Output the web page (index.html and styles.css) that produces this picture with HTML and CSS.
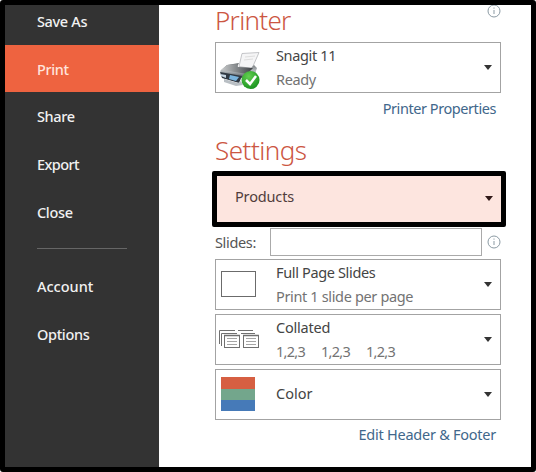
FILE: index.html
```html
<!DOCTYPE html>
<html lang="en">
<head>
<meta charset="utf-8">
<title>Print</title>
<link rel="stylesheet" href="styles.css">
</head>
<body>
<div class="window">
  <nav class="sidebar">
    <a class="item">Save As</a>
    <a class="item active">Print</a>
    <a class="item">Share</a>
    <a class="item export">Export</a>
    <a class="item">Close</a>
    <div class="divider"></div>
    <a class="item account">Account</a>
    <a class="item">Options</a>
  </nav>
  <main class="content">
    <header class="heading-row">
      <h1 class="heading printer">Printer</h1>
      <svg class="info" viewBox="0 0 14 14"><circle cx="7" cy="7" r="6"/><path d="M7 6v4M7 3.5v1.2"/></svg>
    </header>
    <section class="box printer-box">
      <svg class="icon" viewBox="0 0 48 48">
        <defs>
          <linearGradient id="body" x1="0" y1="0" x2="0" y2="1"><stop offset="0" stop-color="#65696c"/><stop offset=".5" stop-color="#b9bec1"/><stop offset="1" stop-color="#343b43"/></linearGradient>
          <linearGradient id="lid" x1="0" y1="0" x2="1" y2="0"><stop offset="0" stop-color="#c9cbcc"/><stop offset=".55" stop-color="#7c8083"/><stop offset="1" stop-color="#3c4043"/></linearGradient>
          <radialGradient id="ok" cx=".4" cy=".3" r=".7"><stop offset="0" stop-color="#63cf50"/><stop offset="1" stop-color="#1b9420"/></radialGradient>
        </defs>
        <path d="M26 9.5l17-1-7 16-13-2z" fill="#f5f5f6" stroke="#b6b8bb" stroke-width=".8"/>
        <path d="M29 13l10-1M28 16l9-1" stroke="#ddd"/>
        <path d="M11 21l12-2-2 4 14 1 3-3 3 3-3 9-29 2-5-8z" fill="url(#body)"/>
        <path d="M11 21l10-1 1 3 15 1-6 6-26-4z" fill="url(#lid)"/>
        <path d="M4 28l22 4-3 7-17-5z" fill="#303943"/>
        <path d="M4 30l6 1v3l-5-2z" fill="#c5d5e2"/>
        <path d="M14 31l9 2-3 4-7-2z" fill="#79b3dd"/>
        <path d="M8 35l14 4 3-2 2 4-7 1-12-4z" fill="#b9bfc4"/>
        <circle cx="34.500" cy="36" r="9" fill="url(#ok)"/>
        <path d="M30 36l4 4 6-8" fill="none" stroke="#fff" stroke-width="2.500"/>
      </svg>
      <div class="labels"><b>Snagit 11</b><small>Ready</small></div>
      <i class="arrow"></i>
    </section>
    <a class="link link-top">Printer Properties</a>
    <h2 class="heading settings">Settings</h2>
    <section class="products"><b>Products</b><i class="arrow"></i></section>
    <div class="slides">
      <label>Slides:</label><div class="field"></div>
      <svg class="info" viewBox="0 0 14 14"><circle cx="7" cy="7" r="6"/><path d="M7 6v4M7 3.5v1.2"/></svg>
    </div>
    <section class="box">
      <svg class="icon" viewBox="0 0 48 48"><rect x="5.500" y="10.500" width="34" height="25" fill="#fff" stroke="#6b6b6b"/></svg>
      <div class="labels"><b>Full Page Slides</b><small>Print 1 slide per page</small></div>
      <i class="arrow"></i>
    </section>
    <section class="box">
      <svg class="icon" viewBox="0 0 48 48" fill="#fff" stroke="#707070">
        <path d="M3.500 28V14.500H19M5.500 30V17.500H21M22 14.500H37M25 17.500H39" fill="none"/>
        <rect x="8.500" y="19.500" width="15" height="12"/><rect x="27.500" y="19.500" width="15" height="12"/>
        <path d="M8 19.500h16M27 19.500h16" stroke-width="1.500"/>
        <path d="M11 22.500h10M11 25.500h10M11 28.500h10M30 22.500h10M30 25.500h10M30 28.500h10" stroke="#a5a5a5"/>
      </svg>
      <div class="labels"><b class="collated">Collated</b><small class="sets"><span>1,2,3</span><span>1,2,3</span><span>1,2,3</span></small></div>
      <i class="arrow"></i>
    </section>
    <section class="box">
      <svg class="icon" viewBox="0 0 48 48"><path fill="#d65f42" d="M5 6h34v12H5z"/><path fill="#73a68c" d="M5 18h34v11H5z"/><path fill="#467ab8" d="M5 29h34v11H5z"/></svg>
      <div class="labels"><b class="color">Color</b></div>
      <i class="arrow"></i>
    </section>
    <a class="link link-edit">Edit Header &amp; Footer</a>
  </main>
</div>
</body>
</html>
```
FILE: styles.css
```css
* { box-sizing: border-box; }
body { margin: 0; background: #fff; font-family: "Noto Sans", "Open Sans", sans-serif; font-size: 14.5px; letter-spacing: -.35px; }
.window { display: flex; width: 536px; height: 472px; border: 5px solid #000; border-radius: 3px; background: #fff; overflow: hidden; }
.sidebar { width: 154px; background: #333; color: #f1f1f1; flex: none; margin-top: -8px; }
.item { display: flex; align-items: center; height: 47.7px; padding-left: 32px; white-space: nowrap; font-weight: 500; }
.active { background: #ee6340; color: #ffe4dc; }
.account { letter-spacing: 0; }
.export { letter-spacing: -.6px; }
.divider { width: 90px; height: 1px; margin: 13px 0 13px 32px; background: #666; }
.content { width: 372px; padding-left: 56px; }
.heading-row { display: flex; justify-content: space-between; width: 286px; height: 37px; }
.heading { margin: 0; color: #cc5642; font-size: 26px; line-height: 32px; font-weight: 300; white-space: nowrap; letter-spacing: -.5px; }
.printer { letter-spacing: -.7px; line-height: 31px; }
.info { width: 14px; height: 14px; fill: none; stroke: #8b9aa3; stroke-width: 1; flex: none; }
.heading-row .info { margin-top: -1px; }
.box { display: flex; align-items: center; width: 286px; height: 51px; margin-bottom: 4px; border: 1px solid #a3a3a3; background: #fff; }
.icon { width: 48px; height: 48px; flex: none; }
.labels { flex: 1; padding-left: 12px; display: flex; flex-direction: column; align-items: flex-start; white-space: nowrap; }
b { color: #444; font-weight: 400; line-height: 24px; }
small { color: #737373; font-size: 14.5px; line-height: 25px; }
.collated { letter-spacing: -.2px; }
.color { letter-spacing: 0; margin-bottom: 4px; }
.sets span { display: inline-block; width: 45px; letter-spacing: -.7px; }
.arrow { width: 0; height: 0; border: 4.5px solid transparent; border-top: 5px solid #333; border-bottom: 0; margin-right: 8px; }
.link { display: block; width: max-content; margin-left: auto; margin-right: 35px; color: #41678b; line-height: 21px; white-space: nowrap; }
.link-top { line-height: 24px; letter-spacing: -.43px; }
.link-edit { letter-spacing: -.25px; }
.printer-box { margin-bottom: 3px; }
.settings { margin-top: 14px; height: 37px; }
.products { display: flex; align-items: center; justify-content: space-between; width: 294px; height: 56px; margin: 0 0 1px -3px; padding: 0 8px 6px 18px; border: 5px solid #000; border-radius: 2px; background: #fde5df; }
.products b { color: #513d3b; letter-spacing: -.15px; }
.products .arrow { margin: 5px 0 0; border-top-color: #301918; }
.slides { display: flex; align-items: center; height: 28px; margin-bottom: 3px; width: 286px; color: #555; }
.slides label { width: 55px; }
.field { width: 212px; height: 28px; border: 1px solid #aaa; margin-right: 5px; }
```
